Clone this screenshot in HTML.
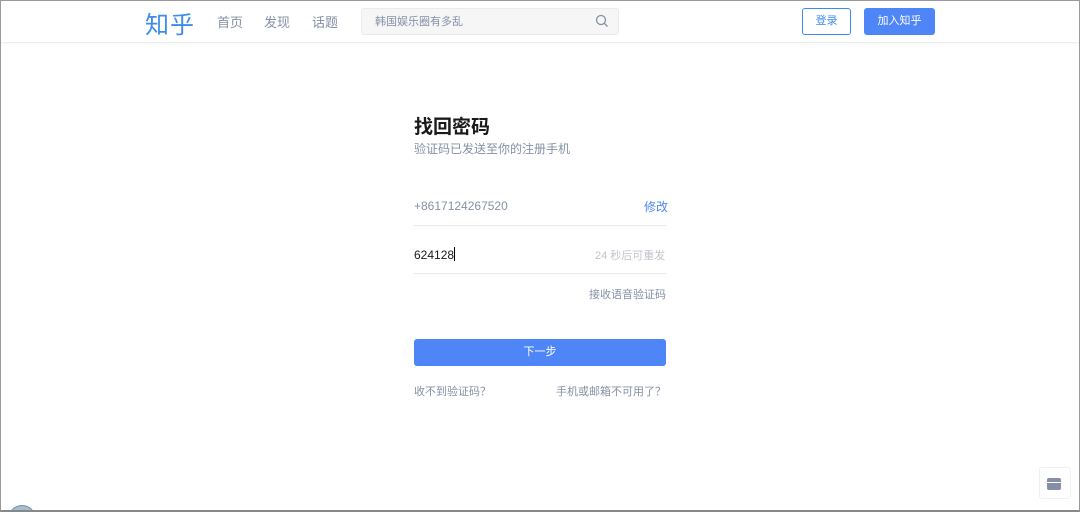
<!DOCTYPE html>
<html><head><meta charset="utf-8"><style>
*{margin:0;padding:0;box-sizing:border-box}
html,body{width:1080px;height:512px;overflow:hidden}
body{background:#fff;font-family:"Liberation Sans","Noto Sans CJK SC",sans-serif;position:relative}
.frame{position:absolute;left:0;top:0;width:1080px;height:512px;border:1px solid #999;border-bottom:2px solid #888;pointer-events:none;z-index:9}
.hdr{position:absolute;left:0;top:0;width:1080px;height:43px;border-bottom:1px solid #eee;box-shadow:0 1px 3px rgba(0,0,0,.04)}
.abs{position:absolute;white-space:nowrap}
</style></head><body>
<div class="hdr"></div>
<div class="abs" style="left:145px;top:5px;font-size:24px;color:#0f6fe8;opacity:.8;letter-spacing:1px">知乎</div>
<div class="abs" style="left:217px;top:12px;font-size:13px;color:#8590a6">首页</div>
<div class="abs" style="left:264px;top:12px;font-size:13px;color:#8590a6">发现</div>
<div class="abs" style="left:312px;top:12px;font-size:13px;color:#8590a6">话题</div>
<div class="abs" style="left:361px;top:8px;width:258px;height:27px;background:#f6f6f6;border:1px solid #ebebeb;border-radius:3px"></div>
<div class="abs" style="left:375px;top:13px;font-size:11px;color:#8590a6">韩国娱乐圈有多乱</div>
<svg class="abs" style="left:595px;top:14px" width="14" height="14" viewBox="0 0 14 14"><circle cx="6" cy="6" r="4.5" fill="none" stroke="#8590a6" stroke-width="1.3"/><path d="M9.3 9.3L12.5 12.5" stroke="#8590a6" stroke-width="1.3"/></svg>
<div class="abs" style="left:802px;top:8px;width:49px;height:27px;border:1px solid #0f6fe8;border-radius:3px;color:#0f6fe8;font-size:11px;text-align:center;line-height:25px;opacity:.8">登录</div>
<div class="abs" style="left:864px;top:8px;width:71px;height:27px;background:#4f86f7;border-radius:3px;color:#fff;font-size:11px;text-align:center;line-height:27px">加入知乎</div>

<div class="abs" style="left:414px;top:112px;font-size:19px;font-weight:bold;color:#1a1a1a">找回密码</div>
<div class="abs" style="left:414px;top:140px;font-size:12px;color:#8590a6">验证码已发送至你的注册手机</div>
<div class="abs" style="left:414px;top:199px;font-size:12px;color:#8590a6">+8617124267520</div>
<div class="abs" style="left:644px;top:198px;font-size:12px;color:#4f86f7">修改</div>
<div class="abs" style="left:414px;top:225px;width:252px;height:1px;background:#ebebeb"></div>
<div class="abs" style="left:414px;top:247px;font-size:12px;color:#1a1a1a">624128<span style="display:inline-block;width:1px;height:14px;background:#000;vertical-align:-2px"></span></div>
<div class="abs" style="left:595px;top:247px;font-size:11px;color:#c0c4cc">24 秒后可重发</div>
<div class="abs" style="left:414px;top:273px;width:252px;height:1px;background:#ebebeb"></div>
<div class="abs" style="left:589px;top:286px;font-size:11px;color:#8590a6">接收语音验证码</div>
<div class="abs" style="left:414px;top:339px;width:252px;height:27px;background:#4f86f7;border-radius:3px;color:#fff;font-size:11px;text-align:center;line-height:27px">下一步</div>
<div class="abs" style="left:414px;top:383px;font-size:11px;color:#8590a6;font-family:'Noto Sans CJK SC',sans-serif;line-height:16px">收不到验证码？</div>
<div class="abs" style="left:556px;top:383px;font-size:11px;color:#8590a6;font-family:'Noto Sans CJK SC',sans-serif;line-height:16px">手机或邮箱不可用了？</div>

<div class="abs" style="left:1039px;top:467px;width:32px;height:32px;border:1px solid #f0f0f0;border-radius:3px;background:#fff"></div>
<div class="abs" style="left:1047px;top:478px;width:14px;height:12px;background:#8590a6;border-radius:2px"></div>
<div class="abs" style="left:1047px;top:482px;width:14px;height:1px;background:#fff"></div>
<div class="abs" style="left:0;top:500px;width:80px;height:10px;overflow:hidden"><div style="position:absolute;left:8px;top:5px;width:28px;height:28px;border-radius:50%;background:#a9bdd0;border:1px solid #7890a8"></div></div>
<div class="frame"></div>
</body></html>
